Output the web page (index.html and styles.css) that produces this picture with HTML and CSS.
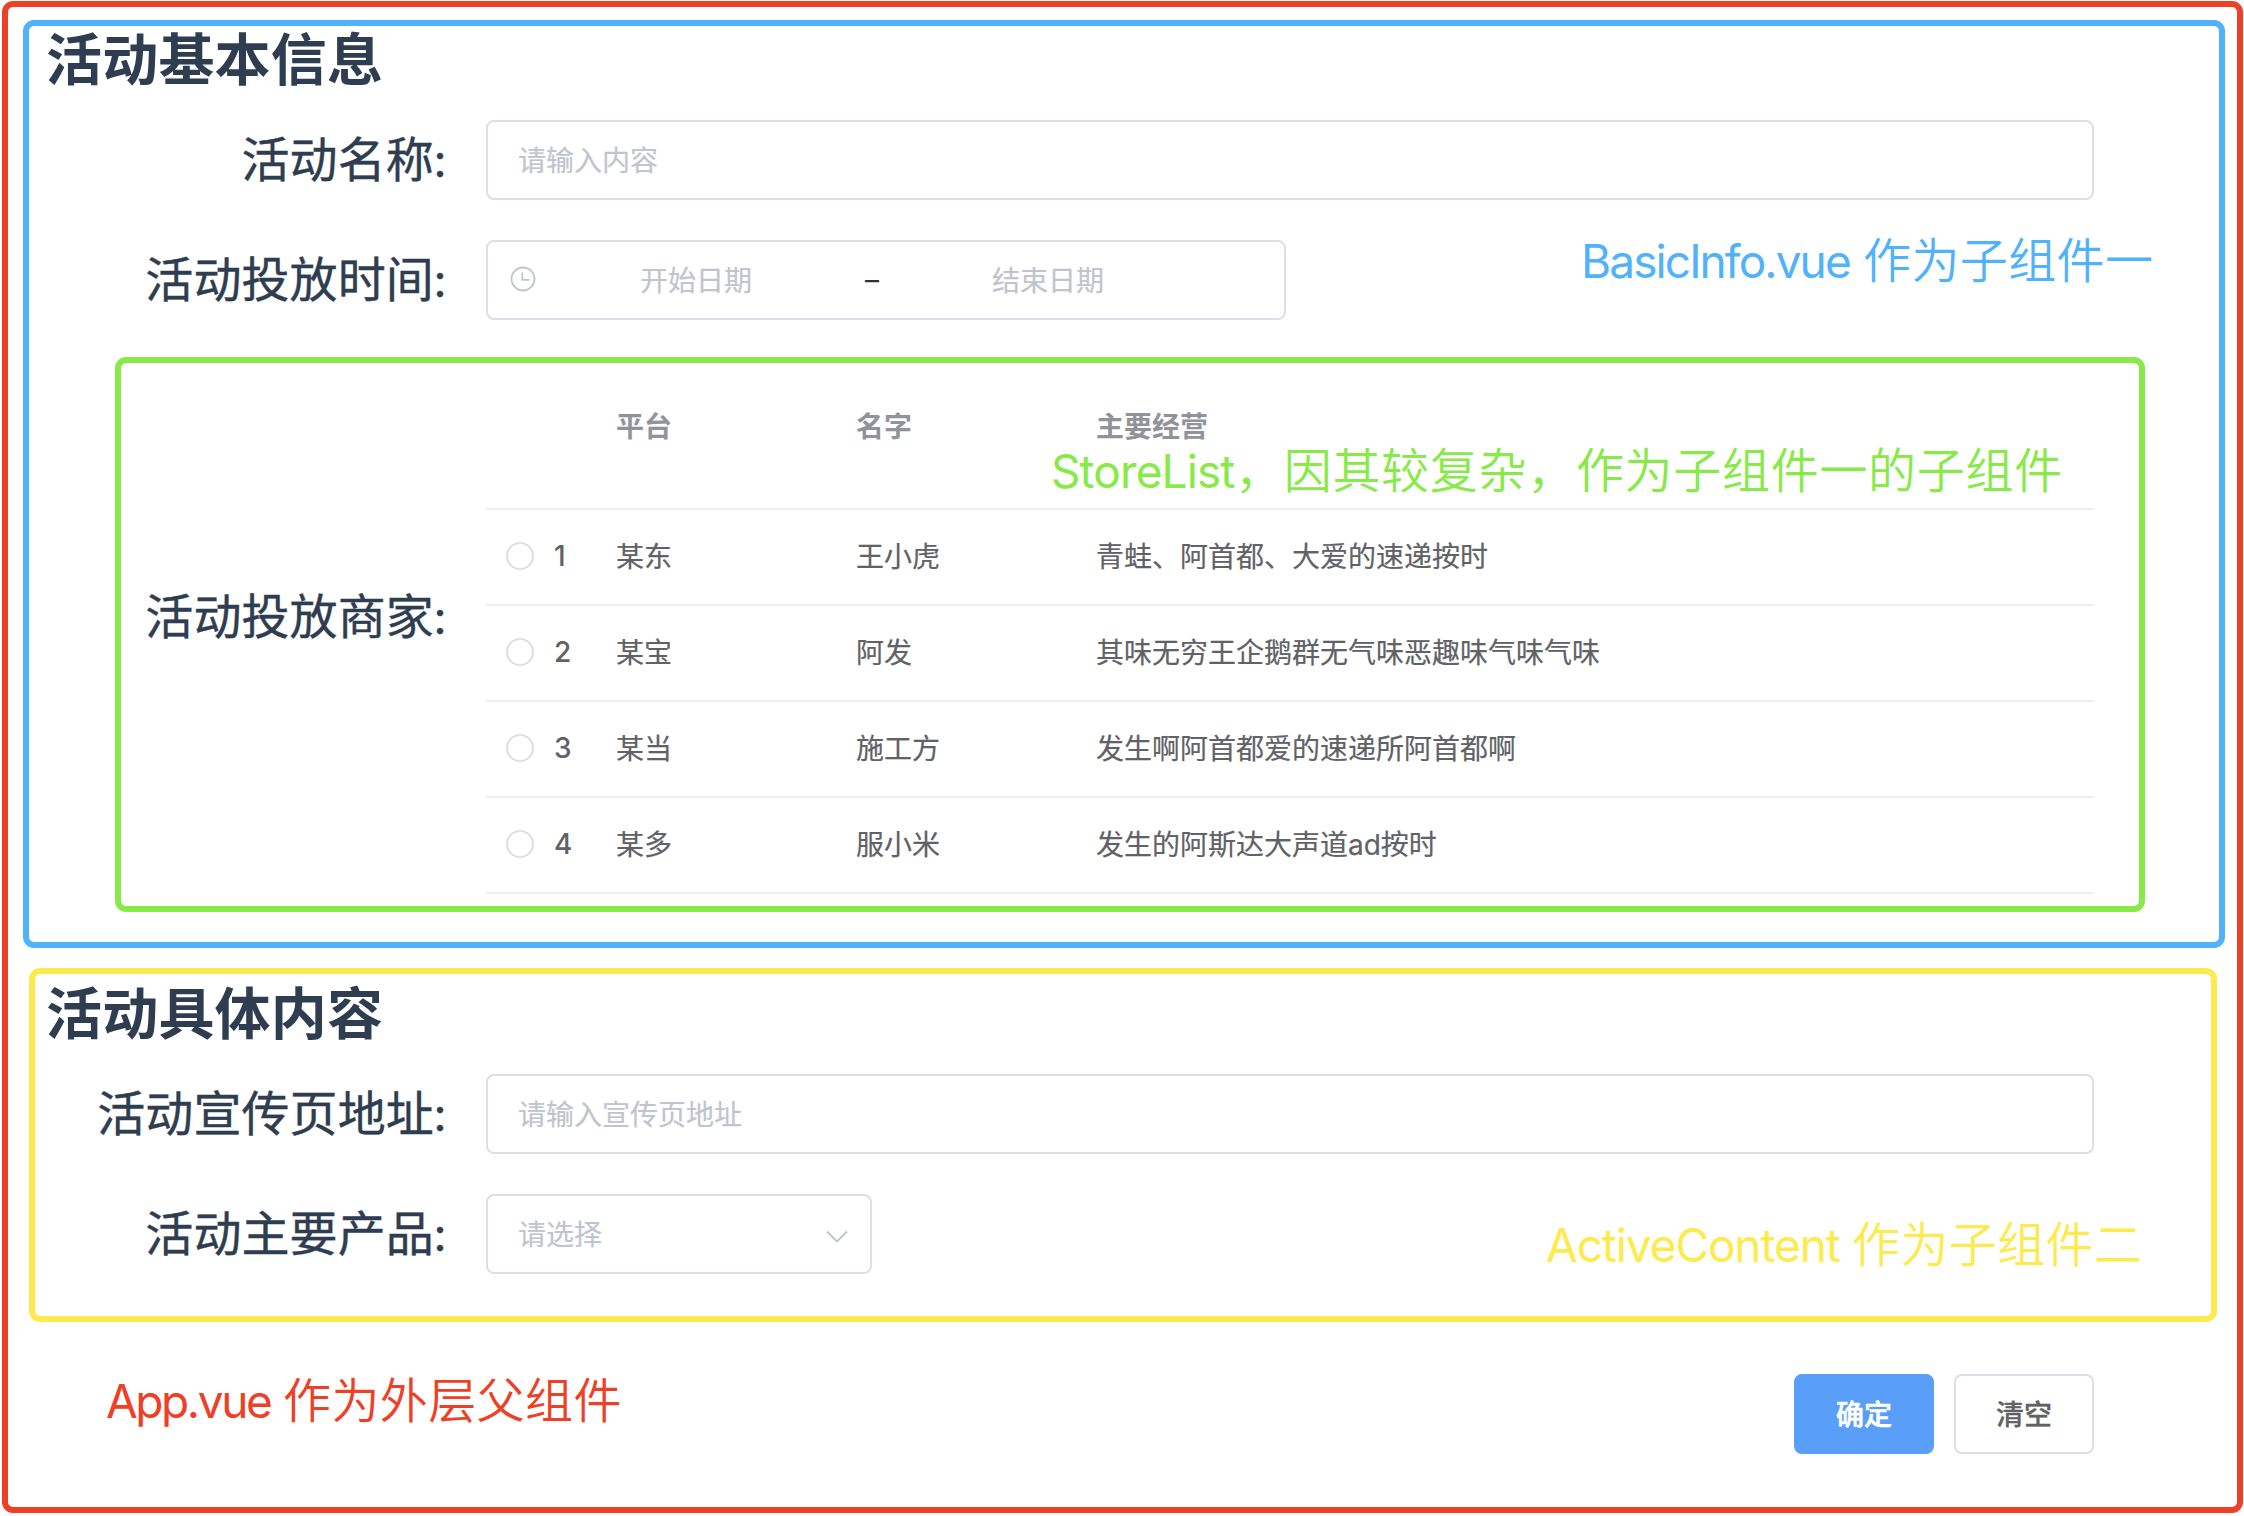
FILE: index.html
```html
<!DOCTYPE html>
<html lang="zh-CN">
<head>
<meta charset="utf-8">
<title>活动信息</title>
<link rel="stylesheet" href="styles.css">
</head>
<body>
<main class="app">
  <section class="panel basic-info">
    <h2 class="title">活动基本信息</h2>
    <div class="rows">
      <div class="row">
        <span class="label">活动名称:</span>
        <div class="field"><span class="placeholder">请输入内容</span></div>
      </div>
      <div class="row">
        <span class="label">活动投放时间:</span>
        <div class="field date-range">
          <svg class="clock" viewBox="0 0 26 26"><circle cx="13" cy="13" r="11.5"/><path d="M12.3 6.5V13.8H19.5"/></svg>
          <span class="date">开始日期</span>
          <span class="dash">–</span>
          <span class="date">结束日期</span>
        </div>
      </div>
    </div>
    <section class="store-list">
      <span class="label store-label">活动投放商家:</span>
      <div class="table">
        <div class="tr head"><span></span><span>平台</span><span>名字</span><span>主要经营</span></div>
        <div class="tr"><span class="choice"><i class="radio"></i>1</span><span class="cell">某东</span><span class="cell">王小虎</span><span class="cell">青蛙、阿首都、大爱的速递按时</span></div>
        <div class="tr"><span class="choice"><i class="radio"></i>2</span><span class="cell">某宝</span><span class="cell">阿发</span><span class="cell">其味无穷王企鹅群无气味恶趣味气味气味</span></div>
        <div class="tr"><span class="choice"><i class="radio"></i>3</span><span class="cell">某当</span><span class="cell">施工方</span><span class="cell">发生啊阿首都爱的速递所阿首都啊</span></div>
        <div class="tr"><span class="choice"><i class="radio"></i>4</span><span class="cell">某多</span><span class="cell">服小米</span><span class="cell">发生的阿斯达大声道ad按时</span></div>
      </div>
    </section>
  </section>

  <section class="panel active-content">
    <h2 class="title">活动具体内容</h2>
    <div class="rows">
      <div class="row">
        <span class="label">活动宣传页地址:</span>
        <div class="field"><span class="placeholder">请输入宣传页地址</span></div>
      </div>
      <div class="row">
        <span class="label">活动主要产品:</span>
        <div class="field select">
          <span class="placeholder">请选择</span>
          <svg class="arrow" viewBox="0 0 22 14"><path d="M1 1.5L11 11.5L21 1.5"/></svg>
        </div>
      </div>
    </div>
  </section>

  <div class="actions">
    <button class="btn primary">确定</button>
    <button class="btn">清空</button>
  </div>

  <p class="note note-basic"><span class="latin">BasicInfo.vue</span>作为子组件一</p>
  <p class="note note-store"><span class="latin">StoreList</span>，因其较复杂，作为子组件一的子组件</p>
  <p class="note note-active"><span class="latin">ActiveContent</span>作为子组件二</p>
  <p class="note note-app"><span class="latin">App.vue</span>作为外层父组件</p>
</main>
</body>
</html>
```
FILE: styles.css
```css
* { box-sizing: border-box; }

body {
  margin: 0;
  background: #fff;
  color: #2f3d50;
  font-family: Inter, "Noto Sans CJK SC", sans-serif;
  font-size: 28px;
  overflow: hidden;
}

.app {
  position: relative;
  width: 2241px;
  height: 1512px;
  margin: 1px 0 0 2px;
  padding: 13px 0 0 15px;
  border: 6px solid #ee4026;
  border-radius: 11px;
}

.panel {
  border: 6px solid;
  border-radius: 11px;
}

.basic-info {
  width: 2202px;
  height: 928px;
  border-color: #4fb2fb;
}

.active-content {
  width: 2188px;
  height: 354px;
  margin: 20px 0 0 6px;
  padding-top: 6px;
  border-color: #fdeb4d;
}

.title {
  margin: 0 0 26px 17px;
  font-size: 56px;
  line-height: 68px;
  font-weight: 700;
  letter-spacing: 0.2px;
}

.active-content .title { margin-left: 11px; }

.rows {
  display: grid;
  gap: 40px;
}

.row {
  display: grid;
  grid-template-columns: 417px 1608px;
  column-gap: 40px;
  height: 80px;
}

.active-content .row { grid-template-columns: 411px 1608px; }

.label {
  font-family: Lato, "Noto Sans CJK SC", sans-serif;
  font-size: 48px;
  line-height: 78px;
  letter-spacing: 0.1px;
  text-align: right;
  white-space: nowrap;
  -webkit-text-stroke: 0.4px currentColor;
}

.field {
  display: flex;
  align-items: center;
  padding: 0 30px 2px;
  border: 2px solid #dcdfe6;
  border-radius: 8px;
  color: #c0c4cc;
}

.date-range {
  width: 800px;
  padding: 0 22px 2px;
}

.clock {
  width: 26px;
  height: 26px;
  fill: none;
  stroke: #c0c4cc;
  stroke-width: 1.8;
}

.date {
  width: 312px;
  text-align: center;
}

.date:nth-of-type(1) { margin-left: 4px; }

.dash {
  width: 40px;
  padding-top: 2px;
  color: #303133;
  text-align: center;
}

.placeholder,
.date,
.cell { -webkit-text-stroke: 0.2px currentColor; }

.select {
  width: 386px;
  justify-content: space-between;
  padding-right: 22px;
}

.arrow {
  width: 22px;
  height: 14px;
  margin-top: 8px;
  fill: none;
  stroke: #c0c4cc;
  stroke-width: 1.8;
}

.store-list {
  display: grid;
  grid-template-columns: 325px 1608px;
  column-gap: 40px;
  width: 2030px;
  height: 555px;
  margin: 37px 0 0 86px;
  border: 6px solid #87ea48;
  border-radius: 11px;
}

.store-label { margin-top: 214px; }

.tr {
  display: grid;
  grid-template-columns: 130px 240px 240px 1fr;
  align-items: center;
  height: 96px;
  padding-bottom: 2px;
  border-bottom: 2px solid #ebeef5;
  color: #606266;
}

.tr.head {
  height: 147px;
  padding-bottom: 21px;
  color: #909399;
  font-weight: 700;
}

.cell { padding-bottom: 2px; }

.choice {
  display: flex;
  align-items: center;
  gap: 20px;
  padding-left: 20px;
  font-weight: 500;
}

.radio {
  width: 28px;
  height: 28px;
  border: 2px solid #dcdfe6;
  border-radius: 50%;
}

.actions {
  display: flex;
  justify-content: flex-end;
  gap: 20px;
  margin-top: 52px;
  padding-right: 143px;
}

.btn {
  width: 140px;
  height: 80px;
  padding: 0 0 2px;
  border: 2px solid #dcdfe6;
  border-radius: 8px;
  background: #fff;
  color: #606266;
  font: 500 28px Inter, "Noto Sans CJK SC", sans-serif;
  -webkit-text-stroke: 0.3px currentColor;
}

.btn.primary {
  border-color: #599ef8;
  background: #599ef8;
  color: #fff;
  -webkit-text-stroke-width: 0.6px;
}

/* Component captions floating over the form */
.note {
  position: absolute;
  display: flex;
  margin: 0;
  font-size: 48px;
  font-weight: 350;
  line-height: 60px;
  letter-spacing: 0.4px;
  white-space: nowrap;
}

.latin {
  font-size: 46px;
  font-weight: 400;
}

.note-basic { left: 1573px; top: 224px; color: #4fb2fb; }
.note-basic .latin { width: 282px; letter-spacing: -1.9px; }
.note-store { left: 1043px; top: 434px; color: #87ea48; letter-spacing: 0.7px; }
.note-store .latin { width: 184px; letter-spacing: -0.9px; }
.note-active { left: 1538px; top: 1208px; color: #fdeb4d; }
.note-active .latin { width: 306px; letter-spacing: -1.1px; }
.note-app { left: 98px; top: 1364px; color: #ee4026; }
.note-app .latin { width: 177px; letter-spacing: -2.4px; }
```
